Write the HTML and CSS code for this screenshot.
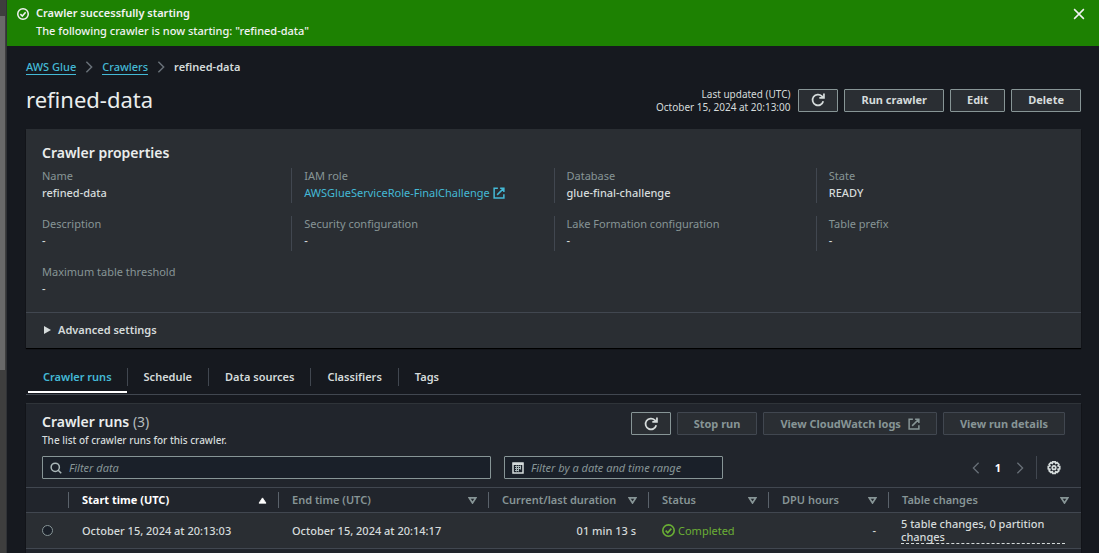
FILE: index.html
```html
<!DOCTYPE html>
<html lang="en">
<head>
<meta charset="utf-8">
<title>refined-data - AWS Glue</title>
<link rel="stylesheet" href="styles.css">
</head>
<body>
<svg class="sprite" aria-hidden="true">
  <symbol id="check" viewBox="0 0 16 16"><circle cx="8" cy="8" r="7"/><path d="M4.5 8.2l2.6 2.6L11.500 5.700"/></symbol>
  <symbol id="chevron" viewBox="0 0 16 16"><path d="M4.500 1l7 7-7 7"/></symbol>
  <symbol id="refresh" viewBox="0 0 16 16"><path d="M14 9.500A6.200 6.200 0 1 1 12.400 3.600L14 5.200M14.800 0.500v5.200H9.500"/></symbol>
  <symbol id="external" viewBox="0 0 16 16"><path d="M6.500 1.500H1.500v13h13V9.500M9.500 1.500h5v5M14.500 1.500L5.500 10.500"/></symbol>
  <symbol id="sort" viewBox="0 0 10 8"><path d="M1.300 1h7.400L5 6.800z"/></symbol>
</svg>
<div class="shell">
  <div class="rail"><div class="rail-thumb"></div></div>
  <div class="page">
    <div class="flash" role="status">
      <svg class="icon flash-icon"><use href="#check"/></svg>
      <div class="flash-text"><strong>Crawler successfully starting</strong><p>The following crawler is now starting: "refined-data"</p></div>
      <button class="plain close" aria-label="Dismiss"><svg class="icon" viewBox="0 0 16 16"><path d="M1.500 1.500l13 13M14.500 1.500l-13 13"/></svg></button>
    </div>
    <main class="content">
      <nav class="crumbs" aria-label="Breadcrumb">
        <a href="#glue">AWS Glue</a><svg class="icon"><use href="#chevron"/></svg>
        <a href="#crawlers">Crawlers</a><svg class="icon"><use href="#chevron"/></svg>
        <strong>refined-data</strong>
      </nav>
      <header class="title-row">
        <h1>refined-data</h1>
        <p class="updated">Last updated (UTC)<br>October 15, 2024 at 20:13:00</p>
        <div class="actions">
          <button class="btn refresh" aria-label="Refresh"><svg class="icon"><use href="#refresh"/></svg></button>
          <button class="btn">Run crawler</button>
          <button class="btn">Edit</button>
          <button class="btn">Delete</button>
        </div>
      </header>
      <section class="panel">
        <h2>Crawler properties</h2>
        <dl class="props">
          <div><dt>Name</dt><dd>refined-data</dd></div>
          <div><dt>IAM role</dt><dd><a href="#role">AWSGlueServiceRole-FinalChallenge <svg class="icon"><use href="#external"/></svg></a></dd></div>
          <div><dt>Database</dt><dd>glue-final-challenge</dd></div>
          <div><dt>State</dt><dd>READY</dd></div>
          <div><dt>Description</dt><dd>-</dd></div>
          <div><dt>Security configuration</dt><dd>-</dd></div>
          <div><dt>Lake Formation configuration</dt><dd>-</dd></div>
          <div><dt>Table prefix</dt><dd>-</dd></div>
          <div><dt>Maximum table threshold</dt><dd>-</dd></div>
        </dl>
        <button class="advanced" aria-expanded="false"><svg viewBox="0 0 7 8"><path d="M0 0l7 4-7 4z"/></svg>Advanced settings</button>
      </section>
      <div class="tabs" role="tablist">
        <button role="tab" aria-selected="true">Crawler runs</button>
        <button role="tab" aria-selected="false">Schedule</button>
        <button role="tab" aria-selected="false">Data sources</button>
        <button role="tab" aria-selected="false">Classifiers</button>
        <button role="tab" aria-selected="false">Tags</button>
      </div>
      <section class="runs">
        <div class="runs-head">
          <div class="runs-title"><h2>Crawler runs <span>(3)</span></h2><p>The list of crawler runs for this crawler.</p></div>
          <div class="actions">
            <button class="btn refresh" aria-label="Refresh runs"><svg class="icon"><use href="#refresh"/></svg></button>
            <button class="btn" disabled>Stop run</button>
            <button class="btn" disabled>View CloudWatch logs <svg class="icon"><use href="#external"/></svg></button>
            <button class="btn" disabled>View run details</button>
          </div>
        </div>
        <div class="filters">
          <label class="field search"><svg class="icon" viewBox="0 0 16 16"><circle cx="7" cy="7" r="5.500"/><path d="M11 11l4 4"/></svg><input type="text" placeholder="Filter data" aria-label="Filter data"></label>
          <button class="field date"><svg class="calendar" viewBox="0 0 12 12"><path class="frame" d="M1 1h10v10H1z"/><path class="band" d="M1 1.500h10v1H1z"/><path class="days" d="M3 4.500h6M3 6.500h6M3 8.500h4M4.500 3.500v6M6.500 3.500v6M8.500 3.500v4"/></svg><span>Filter by a date and time range</span></button>
          <div class="pager">
            <button class="plain" disabled aria-label="Previous page"><svg class="icon flip"><use href="#chevron"/></svg></button>
            <button class="plain current">1</button>
            <button class="plain" disabled aria-label="Next page"><svg class="icon"><use href="#chevron"/></svg></button>
            <span class="rule"></span>
            <button class="plain gear" aria-label="Preferences"><svg class="icon" viewBox="0 0 16 16"><path d="M6.600 1h2.800l.5 1.700 1.600-.8 2 2-.8 1.600 1.800.600v2.800l-1.800.6.8 1.600-2 2-1.600-.8-.5 1.700H6.600l-.5-1.700-1.600.8-2-2 .8-1.600-1.800-.6V6.100l1.800-.6-.8-1.600 2-2 1.600.8z"/><circle cx="8" cy="7.700" r="2"/></svg></button>
          </div>
        </div>
        <table>
          <colgroup><col class="c-pick"><col class="c-time"><col class="c-time"><col class="c-duration"><col class="c-small"><col class="c-small"><col></colgroup>
          <thead><tr>
            <th aria-label="Selection"></th>
            <th class="sorted" aria-sort="ascending"><div>Start time (UTC)<svg class="sort" viewBox="0 0 10 8"><path d="M1 7h8L5 1z"/></svg></div></th>
            <th><div>End time (UTC)<svg class="sort"><use href="#sort"/></svg></div></th>
            <th><div>Current/last duration<svg class="sort"><use href="#sort"/></svg></div></th>
            <th><div>Status<svg class="sort"><use href="#sort"/></svg></div></th>
            <th><div>DPU hours<svg class="sort"><use href="#sort"/></svg></div></th>
            <th><div>Table changes<svg class="sort"><use href="#sort"/></svg></div></th>
          </tr></thead>
          <tbody><tr>
            <td class="pick"><input type="radio" name="run" aria-label="Select run October 15, 2024 at 20:13:03"></td>
            <td>October 15, 2024 at 20:13:03</td>
            <td>October 15, 2024 at 20:14:17</td>
            <td class="num">01 min 13 s</td>
            <td><span class="done"><svg class="icon"><use href="#check"/></svg>Completed</span></td>
            <td class="num">-</td>
            <td><div class="changes">5 table changes, 0 partition changes</div></td>
          </tr></tbody>
        </table>
      </section>
    </main>
  </div>
</div>
</body>
</html>
```
FILE: styles.css
```css
* { box-sizing: border-box; }
body, h1, h2, p, dl, dd { margin: 0; }
body {
  background: #16191f;
  color: #d5dbdb;
  font: 500 11px/18px "Noto Sans", "Open Sans", sans-serif;
}
strong { font-weight: 600; }
button, input { font: inherit; color: inherit; }
button { padding: 0; border: 0; background: none; }
a { color: #44b9d6; }
.sprite { position: absolute; width: 0; height: 0; }
.icon { width: 12px; height: 12px; flex: none; fill: none; stroke: currentColor; stroke-width: 2; }
.shell { display: flex; height: 100vh; overflow: hidden; }
.rail { flex: none; width: 7px; padding: 16px 2px 0 0; background: #3e3e3e; border-right: 1px solid #303236; }
.rail-thumb { height: 64vh; width: 5px; background: #696969; }
.page { flex: 1; min-width: 0; display: flex; flex-direction: column; }

.flash { display: flex; align-items: flex-start; gap: 7px; padding: 4px 14px 6px 10px; background: #1d8102; color: #f2f3f3; }
.flash-icon { margin-top: 4px; }
.flash-text { flex: 1; }
.flash-text strong { display: block; }
.close { margin-top: 4px; }
.close .icon { stroke-width: 2; }
.plain { display: flex; align-items: center; justify-content: center; }

.content { flex: 1; display: flex; flex-direction: column; padding: 12px 18px 0 19px; }
.crumbs { display: flex; align-items: center; gap: 7px; }
.crumbs a { line-height: 14px; text-decoration: none; border-bottom: 1px solid; }
.crumbs .icon { color: #687078; }
.title-row { display: flex; align-items: center; padding: 8px 0 13px; }
h1 { flex: 1; font-size: 22px; line-height: 30px; font-weight: 400; color: #eaeded; padding-bottom: 2px; }
.updated { margin-right: 8px; padding-top: 1px; text-align: right; font-size: 10px; line-height: 13px; font-weight: 400; }
.actions { display: flex; gap: 6px; }
.btn {
  display: flex; align-items: center; justify-content: center; gap: 7px;
  height: 23px; padding: 0 16px;
  border: 1px solid #879596; border-radius: 1px; background: #2a2e33;
  font-weight: 700; white-space: nowrap;
}
.btn:disabled { border-color: #414750; color: #879596; }
.refresh { width: 40px; padding: 0; }
.refresh .icon { width: 14px; height: 14px; }

.panel { background: #2a2e33; box-shadow: 0 1px 1px #000; }
h2 { font-size: 14px; line-height: 18px; font-weight: 600; color: #eaeded; }
.panel h2 { padding: 15px 16px 6px; }
.props { display: grid; grid-template-columns: repeat(4, 1fr); row-gap: 13px; padding: 0 3px 13px; }
.props div { padding-left: 12px; border-left: 1px solid #414750; height: 35px; }
.props div:nth-child(4n+1) { border-color: transparent; }
.props dt { color: #879596; line-height: 16px; font-weight: 400; }
.props dd { line-height: 18px; }
.props a { display: inline-flex; align-items: center; gap: 3px; text-decoration: none; font-weight: 400; }
.advanced { display: flex; align-items: center; gap: 7px; width: 100%; height: 36px; padding: 0 0 2px 18px; border-top: 1px solid #414750; font-weight: 600; }
.advanced svg { width: 7px; height: 8px; fill: currentColor; }

.tabs { display: flex; flex: none; margin-top: 11px; height: 36px; padding: 9px 0 0 2px; border-bottom: 1px solid #414750; }
.tabs button { display: flex; padding: 0 15px 5px; font-weight: 600; }
.tabs button + button { padding: 0 16px; height: 18px; border-left: 1px solid #414750; }
.tabs button[aria-selected="true"] { color: #44b9d6; height: 25px; border-bottom: 2px solid #fff; }

.runs { flex: 1; margin-top: 8px; background: #21252c; border-top: 1px solid #2f3439; box-shadow: 0 1px 1px #000; }
.runs-head { display: flex; justify-content: space-between; align-items: flex-start; padding: 8px 16px 7px; }
.runs-title { padding-top: 1px; }
.runs h2 span { font-weight: 400; color: #b5bcbd; }
.runs-title p { font-size: 10px; }
.filters { display: flex; align-items: center; gap: 13px; padding: 0 20px 8px 16px; }
.field { display: flex; align-items: center; gap: 7px; height: 23px; padding: 0 7px; border: 1px solid #879596; border-radius: 1px; background: #1a2029; font-weight: 400; }
.field input { flex: 1; min-width: 0; padding: 0; border: 0; outline: 0; background: none; font-style: italic; }
.field input::placeholder { color: #879596; opacity: 1; }
.search { flex: 1 1 449px; max-width: 449px; color: #aab7b8; }
.date { width: 219px; color: #879596; font-style: italic; }
.calendar { width: 12px; height: 12px; fill: none; stroke: #d5dbdb; }
.calendar .frame { stroke-width: 1.500; }
.calendar .days { stroke-width: 1; stroke: #aab7b8; }
.pager { display: flex; align-items: center; gap: 10px; margin-left: auto; }
.pager .icon { stroke-width: 1.700; }
.pager .plain { color: #d5dbdb; min-width: 12px; }
.pager .plain:disabled { color: #687078; }
.pager .current { color: #fff; font-weight: 700; }
.flip { transform: scaleX(-1); }
.rule { height: 23px; border-left: 1px solid #414750; }
.pager .gear .icon { width: 14px; height: 14px; stroke-width: 2; }

table { width: 100%; table-layout: fixed; border-collapse: collapse; }
.c-pick { width: 42px; }
.c-time { width: 210px; }
.c-duration { width: 160px; }
.c-small { width: 120px; }
th { height: 25px; padding: 0; border: solid #414750; border-width: 1px 0; text-align: left; font-weight: 600; color: #879596; white-space: nowrap; }
th div { display: flex; align-items: center; justify-content: space-between; height: 16px; padding: 0 11px 0 13px; border-left: 1px solid #5a626b; }
th:last-child div { padding-right: 12px; }
.sort { width: 9px; height: 7px; fill: none; stroke: currentColor; stroke-width: 2; }
.sorted { color: #fff; font-weight: 700; }
.sorted .sort path { fill: currentColor; stroke-width: 1; }
tbody { background: #2a2e33; }
td { height: 36px; padding: 0 12px 0 14px; border-bottom: 1px solid #414750; }
.pick { padding: 0 0 0 16px; }
.pick input { display: block; appearance: none; width: 11px; height: 11px; margin: 0; border: 1px solid #879596; border-radius: 50%; background: #1a2029; }
.num { text-align: right; }
.done { display: flex; align-items: center; gap: 3px; color: #6aaf35; font-weight: 400; }
.done .icon { width: 13px; height: 13px; stroke-width: 2; }
td:last-child { padding: 0 16px 0 13px; }
.changes { line-height: 13px; border-bottom: 1px dashed #d5dbdb; }
```
